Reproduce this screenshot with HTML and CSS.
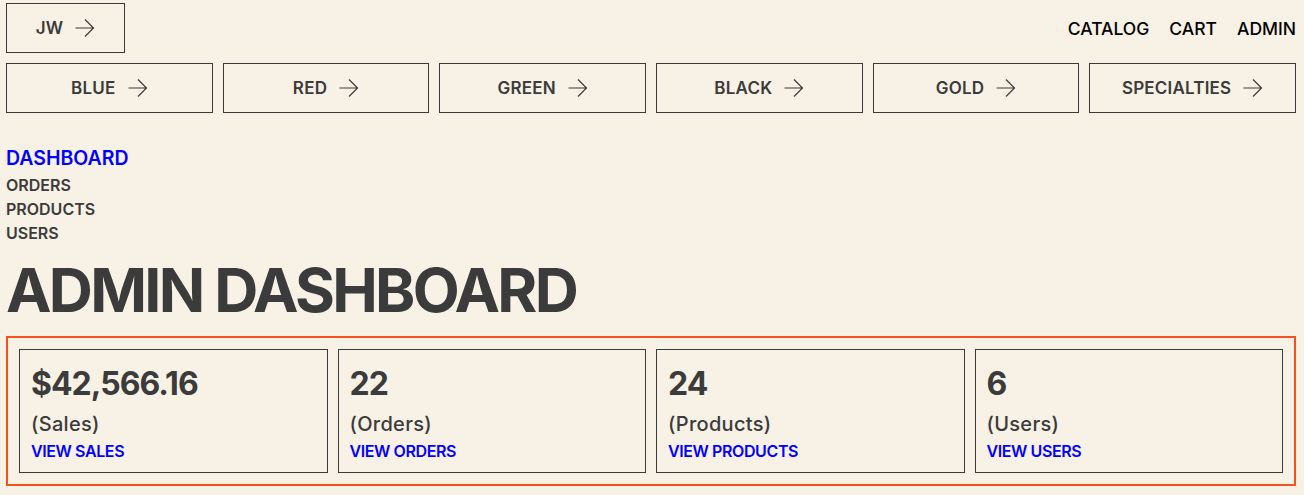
FILE: index.html
```html
<!DOCTYPE html>
<html lang="en">
<head>
<meta charset="utf-8">
<title>Admin Dashboard</title>
<link rel="stylesheet" href="styles.css">
</head>
<body>
<header class="top">
  <a class="btn btn-home" href="#">JW <svg class="arrow" viewBox="0 0 20 20" width="20" height="20"><path d="M0.5 10h18.5M10 1.5l8.5 8.5-8.5 8.5" fill="none" stroke="currentColor" stroke-width="1.2"/></svg></a>
  <nav class="main-nav">
    <a href="#">CATALOG</a>
    <a href="#">CART</a>
    <a href="#">ADMIN</a>
  </nav>
</header>
<nav class="cats">
  <a class="btn" href="#">BLUE <svg class="arrow" viewBox="0 0 20 20" width="20" height="20"><path d="M0.5 10h18.5M10 1.5l8.5 8.5-8.5 8.5" fill="none" stroke="currentColor" stroke-width="1.2"/></svg></a>
  <a class="btn" href="#">RED <svg class="arrow" viewBox="0 0 20 20" width="20" height="20"><path d="M0.5 10h18.5M10 1.5l8.5 8.5-8.5 8.5" fill="none" stroke="currentColor" stroke-width="1.2"/></svg></a>
  <a class="btn" href="#">GREEN <svg class="arrow" viewBox="0 0 20 20" width="20" height="20"><path d="M0.5 10h18.5M10 1.5l8.5 8.5-8.5 8.5" fill="none" stroke="currentColor" stroke-width="1.2"/></svg></a>
  <a class="btn" href="#">BLACK <svg class="arrow" viewBox="0 0 20 20" width="20" height="20"><path d="M0.5 10h18.5M10 1.5l8.5 8.5-8.5 8.5" fill="none" stroke="currentColor" stroke-width="1.2"/></svg></a>
  <a class="btn" href="#">GOLD <svg class="arrow" viewBox="0 0 20 20" width="20" height="20"><path d="M0.5 10h18.5M10 1.5l8.5 8.5-8.5 8.5" fill="none" stroke="currentColor" stroke-width="1.2"/></svg></a>
  <a class="btn" href="#">SPECIALTIES <svg class="arrow" viewBox="0 0 20 20" width="20" height="20"><path d="M0.5 10h18.5M10 1.5l8.5 8.5-8.5 8.5" fill="none" stroke="currentColor" stroke-width="1.2"/></svg></a>
</nav>
<aside class="side">
  <a class="side-link active" href="#">DASHBOARD</a>
  <a class="side-link" href="#">ORDERS</a>
  <a class="side-link" href="#">PRODUCTS</a>
  <a class="side-link" href="#">USERS</a>
</aside>
<h1 class="title">ADMIN DASHBOARD</h1>
<section class="stats">
  <div class="card">
    <div class="num">$42,566.16</div>
    <div class="label">(Sales)</div>
    <a class="more" href="#">VIEW SALES</a>
  </div>
  <div class="card">
    <div class="num">22</div>
    <div class="label">(Orders)</div>
    <a class="more" href="#">VIEW ORDERS</a>
  </div>
  <div class="card">
    <div class="num">24</div>
    <div class="label">(Products)</div>
    <a class="more" href="#">VIEW PRODUCTS</a>
  </div>
  <div class="card">
    <div class="num">6</div>
    <div class="label">(Users)</div>
    <a class="more" href="#">VIEW USERS</a>
  </div>
</section>
</body>
</html>
```
FILE: styles.css
```css
* { box-sizing: border-box; }
html, body { margin: 0; }
body {
  background: #f8f1e5;
  color: #3b3b3b;
  font-family: Inter, "Liberation Sans", sans-serif;
  padding: 3px 8px 0 6px;
}
a { text-decoration: none; color: inherit; }

.top {
  display: flex;
  justify-content: space-between;
  align-items: center;
}
.btn {
  display: flex;
  align-items: center;
  justify-content: center;
  gap: 12px;
  height: 50px;
  border: 1px solid #3b3b3b;
  font-size: 17px;
  font-weight: 600;
  color: #3b3b3b;
  letter-spacing: 0.2px;
}
.btn-home { width: 119px; }
.arrow { display: block; }

.main-nav {
  display: flex;
  gap: 20px;
  font-size: 17.5px;
  font-weight: 500;
  color: #000;
  margin-top: 1px;
}

.cats {
  display: grid;
  grid-template-columns: repeat(6, 1fr);
  gap: 10px;
  margin-top: 10px;
}

.side {
  display: flex;
  flex-direction: column;
  margin-top: 31px;
}
.side-link {
  font-size: 16px;
  font-weight: 600;
  line-height: 24px;
}
.side-link.active {
  color: #0000ff;
  font-size: 19.5px;
  line-height: 29px;
}

.title {
  margin: 10px 0 0;
  font-size: 61px;
  font-weight: 700;
  letter-spacing: -2.7px;
  line-height: 70px;
}

.stats {
  margin-top: 11px;
  border: 2px solid #f4511e;
  padding: 11px;
  display: grid;
  grid-template-columns: repeat(4, 1fr);
  gap: 10px;
}
.card {
  border: 1px solid #3b3b3b;
  padding: 15px 11px 9px;
  display: flex;
  flex-direction: column;
}
.num {
  font-size: 32px;
  font-weight: 700;
  line-height: 38px;
  letter-spacing: -1px;
}
.label {
  font-size: 20px;
  font-weight: 500;
  line-height: 30px;
  margin-top: 6px;
  letter-spacing: 0.3px;
}
.more {
  color: #0000ff;
  font-size: 16px;
  font-weight: 600;
  line-height: 24px;
  letter-spacing: -0.4px;
}
```
